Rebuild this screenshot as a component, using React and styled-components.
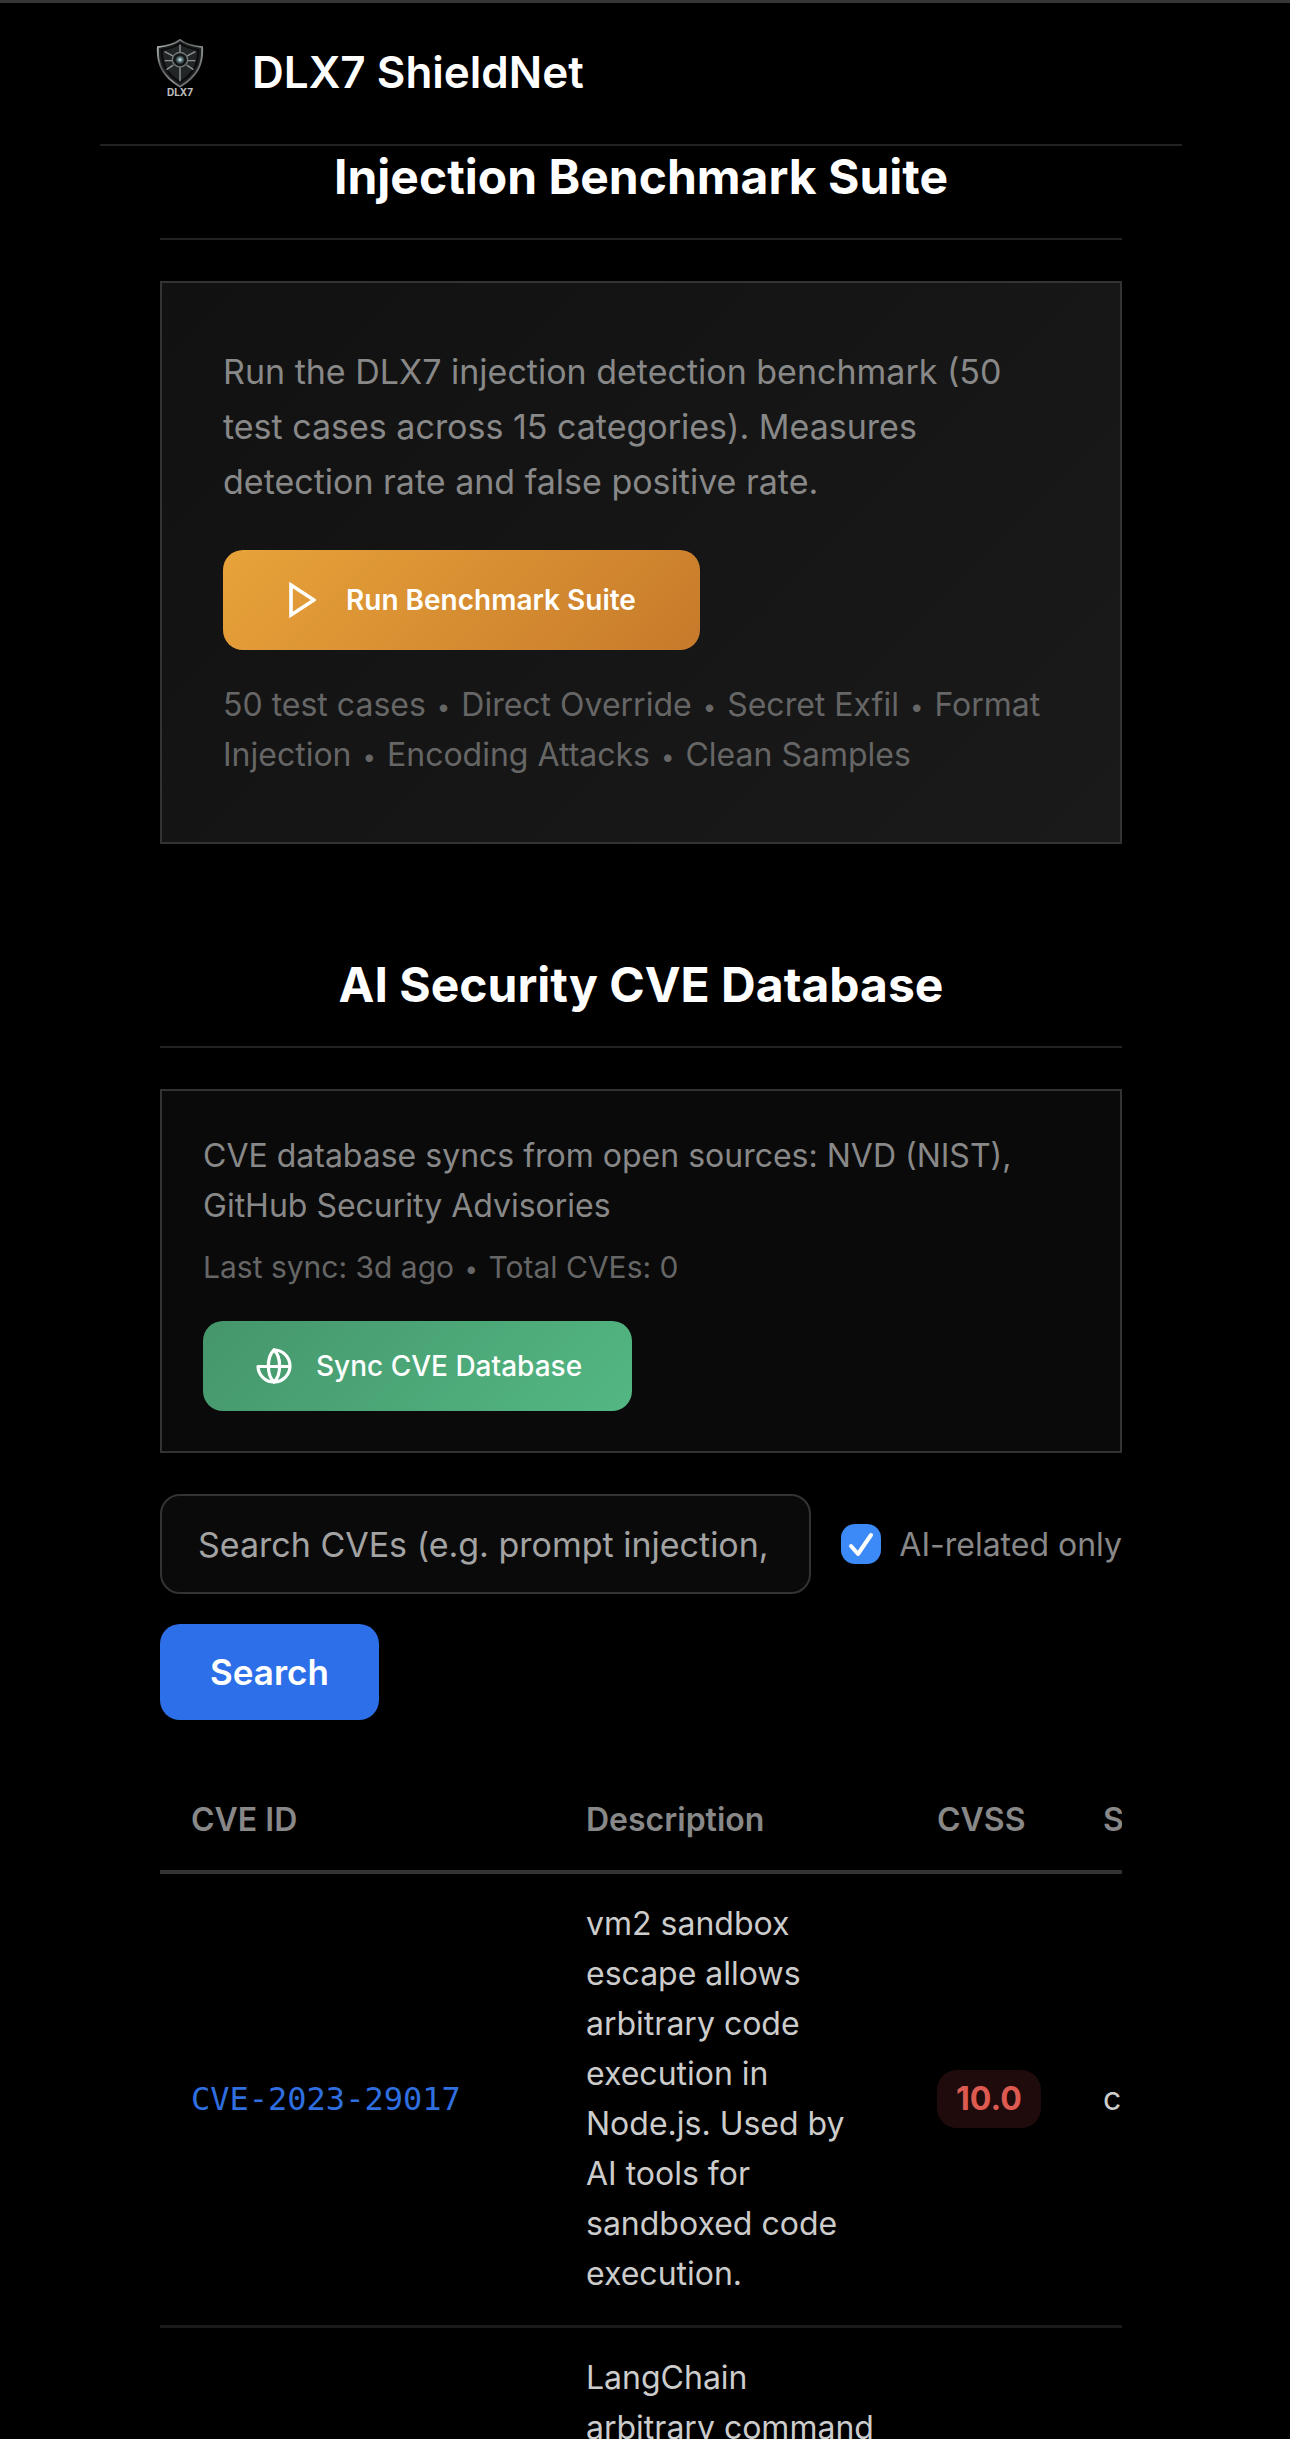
import { useState } from "react";
import styled, { createGlobalStyle } from "styled-components";

const cves = [
  {
    id: "CVE-2023-29017",
    description: "vm2 sandbox escape allows arbitrary code execution in Node.js. Used by AI tools for sandboxed code execution.",
    cvss: "10.0",
    severity: "critical",
  },
  {
    description: "LangChain arbitrary command",
  },
];

const ShieldLogo = () => (
  <svg width="50" height="60" viewBox="0 0 50 60" role="img" aria-label="DLX7">
    <defs>
      <linearGradient id="rim" x1="0" y1="0" x2="1" y2="1">
        <stop offset="0" stopColor="#c4c7c8" />
        <stop offset="0.35" stopColor="#55595a" />
        <stop offset="0.6" stopColor="#8b8f90" />
        <stop offset="1" stopColor="#4a4d4e" />
      </linearGradient>
      <radialGradient id="core">
        <stop offset="0" stopColor="#e4f4f5" />
        <stop offset="0.4" stopColor="#6f8c91" />
        <stop offset="1" stopColor="#15191a" />
      </radialGradient>
    </defs>
    <g transform="translate(1 0) scale(0.96 0.9)">
      <path
        d="M25 1 C19 6 11 8 2 9 C1 27 6 41 25 53 C44 41 49 27 48 9 C39 8 31 6 25 1Z"
        fill="#1b1d1e"
        stroke="url(#rim)"
        strokeWidth="2"
      />
      <path d="M25 5 C19 9 13 11 6 12 C6 27 10 38 25 48 C40 38 44 27 44 12 C37 11 31 9 25 5Z" fill="#222526" stroke="#090a0a" strokeWidth="2" />
      <path d="M25 6v10M25 31v16M9 14l9 5M41 14l-9 5M9 24h8M33 24h8M11 34l7-5M39 34l-7-5" stroke="#8e9292" strokeWidth="1.5" />
      <circle cx="25" cy="23" r="8" fill="#131617" stroke="#727879" strokeWidth="1.5" />
      <circle cx="25" cy="23" r="5" fill="url(#core)" />
    </g>
    <text x="25" y="57" textAnchor="middle" fontFamily="Inter, sans-serif" fontSize="10" fontWeight="700" fill="#c0c0c0">
      DLX7
    </text>
  </svg>
);

const PlayIcon = () => (
  <svg width="30" height="38" viewBox="0 0 30 38" fill="none" stroke="currentColor" strokeWidth="3.6" aria-hidden="true">
    <path d="M5 4 L28 19 L5 34Z" />
  </svg>
);

const GlobeIcon = () => (
  <svg width="36" height="36" viewBox="0 0 36 36" fill="none" stroke="currentColor" strokeWidth="3.2" strokeLinecap="round" aria-hidden="true">
    <path d="M2 18.500 A16 16 0 1 0 18 2 M2 18.500 H34" />
    <path d="M18 2 C10.500 9 10.500 27 18 34 C25.500 27 25.500 9 18 2Z" />
  </svg>
);

const App = () => {
  const [query, setQuery] = useState("");
  const [aiOnly, setAiOnly] = useState(true);

  return (
    <Shell>
      <GlobalStyle />
      <Header>
        <ShieldLogo />
        <Brand>DLX7 ShieldNet</Brand>
      </Header>
      <Main>
        <Section>
          <SectionTitle>Injection Benchmark Suite</SectionTitle>
          <BenchmarkCard>
            <Lead>Run the DLX7 injection detection benchmark (50 test cases across 15 categories). Measures detection rate and false positive rate.</Lead>
            <BenchmarkButton type="button">
              <PlayIcon />
              Run Benchmark Suite
            </BenchmarkButton>
            <Note>
              50 test cases <Dot>•</Dot> Direct Override <Dot>•</Dot> Secret Exfil <Dot>•</Dot> Format Injection <Dot>•</Dot> Encoding Attacks{" "}
              <Dot>•</Dot> Clean Samples
            </Note>
          </BenchmarkCard>
        </Section>
        <Section>
          <SectionTitle>AI Security CVE Database</SectionTitle>
          <SyncCard>
            <SyncText>CVE database syncs from open sources: NVD (NIST), GitHub Security Advisories</SyncText>
            <SyncStatus>
              Last sync: 3d ago <Dot>•</Dot> Total CVEs: 0
            </SyncStatus>
            <SyncButton type="button">
              <GlobeIcon />
              Sync CVE Database
            </SyncButton>
          </SyncCard>
          <SearchForm onSubmit={(e) => e.preventDefault()}>
            <SearchInput
              type="text"
              aria-label="Search CVEs"
              placeholder="Search CVEs (e.g. prompt injection,"
              value={query}
              onChange={(e) => setQuery(e.target.value)}
            />
            <CheckLabel>
              <Checkbox type="checkbox" checked={aiOnly} onChange={(e) => setAiOnly(e.target.checked)} />
              AI-related only
            </CheckLabel>
            <SearchButton type="submit">Search</SearchButton>
          </SearchForm>
          <TableWrap>
            <Table>
              <thead>
                <tr>
                  <Th width="395px">CVE ID</Th>
                  <Th width="351px">Description</Th>
                  <Th width="166px">CVSS</Th>
                  <Th>Severity</Th>
                </tr>
              </thead>
              <tbody>
                {cves.map((cve, index) => (
                  <tr key={index}>
                    <Td>{cve.id && <CveLink href="#">{cve.id}</CveLink>}</Td>
                    <Td>{cve.description}</Td>
                    <Td>{cve.cvss && <Score>{cve.cvss}</Score>}</Td>
                    <Td>{cve.severity}</Td>
                  </tr>
                ))}
              </tbody>
            </Table>
          </TableWrap>
        </Section>
      </Main>
    </Shell>
  );
};

const GlobalStyle = createGlobalStyle`
  * {
    box-sizing: border-box;
  }
  body {
    margin: 0;
    background: #000;
    color: #fff;
    font-family: Inter, "Liberation Sans", sans-serif;
  }
  h1, h2, p {
    margin: 0;
  }
  button, input {
    font-family: inherit;
  }
`;

const Shell = styled.div`
  height: 100vh;
  overflow: hidden;
  display: flex;
  flex-direction: column;
  padding: 0 108px 0 100px;
  border-top: 3px solid #343638;
`;

const Header = styled.header`
  flex: none;
  display: flex;
  align-items: center;
  gap: 47px;
  height: 143px;
  padding: 0 55px 10px;
  border-bottom: 2px solid #222;
`;

const Brand = styled.h1`
  padding-top: 6px;
  font-size: 44px;
  font-weight: 600;
`;

const Main = styled.main`
  flex: 1;
  min-height: 0;
  overflow: hidden;
  padding: 0 60px;
`;

const Section = styled.section`
  margin-bottom: 110px;
`;

const SectionTitle = styled.h2`
  padding-bottom: 30px;
  margin-bottom: 41px;
  border-bottom: 2px solid #222;
  font-size: 48px;
  line-height: 62px;
  font-weight: 700;
  text-align: center;
`;

const Card = styled.div`
  border: 2px solid #333;
`;

const BenchmarkCard = styled(Card)`
  padding: 61px 61px 62px;
  background: linear-gradient(135deg, #111, #1a1a1a);
`;

const SyncCard = styled(Card)`
  padding: 40px 41px;
  background: #0a0a0a;
`;

const Lead = styled.p`
  margin-bottom: 41px;
  color: #888;
  font-size: 34px;
  line-height: 55px;
`;

const Note = styled.p`
  margin-top: 30px;
  color: #666;
  font-size: 32px;
  line-height: 50px;
`;

const Dot = styled.span`
  margin: 0 2px;
  font-size: 24px;
  line-height: 1;
  vertical-align: 1px;
`;

const SyncText = styled.p`
  color: #888;
  font-size: 32px;
  line-height: 50px;
`;

const SyncStatus = styled.p`
  margin: 12px 0 30px;
  color: #666;
  font-size: 30px;
  line-height: 48px;
`;

const ActionButton = styled.button`
  display: flex;
  align-items: center;
  border: 0;
  border-radius: 20px;
  color: #fff;
  font-size: 28px;
`;

const BenchmarkButton = styled(ActionButton)`
  height: 100px;
  gap: 30px;
  padding: 0 64px 0 63px;
  background: linear-gradient(135deg, #e8a33a, #c77a2a);
  font-weight: 600;
`;

const SyncButton = styled(ActionButton)`
  height: 90px;
  gap: 24px;
  padding: 0 50px 0 53px;
  background: linear-gradient(135deg, #45966b, #53b783);
  font-weight: 500;
`;

const SearchForm = styled.form`
  display: flex;
  flex-wrap: wrap;
  align-items: center;
  gap: 30px;
  margin: 41px 0 50px;
`;

const SearchInput = styled.input`
  flex: 1;
  min-width: 600px;
  height: 100px;
  padding: 0 36px;
  border: 2px solid #333;
  border-radius: 20px;
  background: #0a0a0a;
  color: #fff;
  font-size: 34px;
  &::placeholder {
    color: #a3a3a3;
  }
`;

const CheckLabel = styled.label`
  display: flex;
  align-items: center;
  gap: 18px;
  color: #888;
  font-size: 32px;
  white-space: nowrap;
`;

const Checkbox = styled.input`
  appearance: none;
  width: 40px;
  height: 40px;
  margin: 0;
  border: 2px solid #555;
  border-radius: 14px;
  &:checked {
    border: 0;
    background: #3b8af7
      url("data:image/svg+xml,%3Csvg xmlns='http://www.w3.org/2000/svg' viewBox='0 0 40 40' fill='none' stroke='white' stroke-width='4' stroke-linecap='round' stroke-linejoin='round'%3E%3Cpath d='M10 22l7 8 13-19'/%3E%3C/svg%3E")
      center / contain no-repeat;
  }
`;

const SearchButton = styled.button`
  height: 96px;
  padding: 0 50px;
  border: 0;
  border-radius: 20px;
  background: #2d6fe8;
  color: #fff;
  font-size: 35px;
  font-weight: 600;
`;

const TableWrap = styled.div`
  overflow-x: hidden;
`;

const Table = styled.table`
  width: 1240px;
  table-layout: fixed;
  border-collapse: separate;
  border-spacing: 0;
  font-size: 32px;
  line-height: 50px;
  text-align: left;
`;

const Th = styled.th`
  width: ${(props) => props.width};
  padding: 25px 31px;
  border-bottom: 4px solid #333;
  color: #888;
  font-weight: 600;
`;

const Td = styled.td`
  padding: 25px 31px 26px;
  border-bottom: 3px solid #1a1a1a;
  color: #ccc;
  vertical-align: middle;
`;

const CveLink = styled.a`
  color: #2f6fe0;
  font-family: "DejaVu Sans Mono", "Liberation Mono", monospace;
  text-decoration: none;
  white-space: nowrap;
`;

const Score = styled.span`
  display: inline-block;
  padding: 4px 19px;
  border-radius: 20px;
  background: #1f0b0b;
  color: #dc5a50;
  font-size: 32px;
  font-weight: 700;
`;

export default App;
